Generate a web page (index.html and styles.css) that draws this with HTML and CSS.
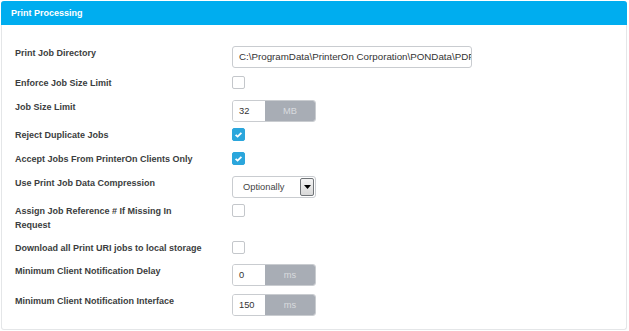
FILE: index.html
```html
<!DOCTYPE html>
<html>
<head>
<meta charset="utf-8">
<link rel="stylesheet" href="styles.css">
</head>
<body>
<div class="panel">
  <div class="panel-head">Print Processing</div>
  <div class="panel-body">
    <div class="row h30">
      <div class="label">Print Job Directory</div>
      <div class="ctl"><div class="text-input wide">C:\ProgramData\PrinterOn Corporation\PONData\PDF</div></div>
    </div>
    <div class="row h24">
      <div class="label">Enforce Job Size Limit</div>
      <div class="ctl"><span class="cb"></span></div>
    </div>
    <div class="row h28">
      <div class="label">Job Size Limit</div>
      <div class="ctl"><div class="group"><span class="num">32</span><span class="addon">MB</span></div></div>
    </div>
    <div class="row h24">
      <div class="label">Reject Duplicate Jobs</div>
      <div class="ctl"><span class="cb on"><svg viewBox="0 0 13 13" width="13" height="13"><path d="M3.6 6.8 L5.6 8.6 L9.4 4.8" fill="none" stroke="#fff" stroke-width="1.8"/></svg></span></div>
    </div>
    <div class="row h24">
      <div class="label">Accept Jobs From PrinterOn Clients Only</div>
      <div class="ctl"><span class="cb on"><svg viewBox="0 0 13 13" width="13" height="13"><path d="M3.6 6.8 L5.6 8.6 L9.4 4.8" fill="none" stroke="#fff" stroke-width="1.8"/></svg></span></div>
    </div>
    <div class="row h28">
      <div class="label">Use Print Job Data Compression</div>
      <div class="ctl"><div class="select"><span class="sel-text">Optionally</span><span class="sel-btn"><svg viewBox="0 0 7 4" width="7" height="4"><path d="M0 0 H7 L3.5 4 Z" fill="#000"/></svg></span></div></div>
    </div>
    <div class="row h37">
      <div class="label two">Assign Job Reference # If Missing In Request</div>
      <div class="ctl"><span class="cb"></span></div>
    </div>
    <div class="row h23">
      <div class="label">Download all Print URI jobs to local storage</div>
      <div class="ctl"><span class="cb"></span></div>
    </div>
    <div class="row h30">
      <div class="label">Minimum Client Notification Delay</div>
      <div class="ctl"><div class="group"><span class="num">0</span><span class="addon">ms</span></div></div>
    </div>
    <div class="row h30">
      <div class="label">Minimum Client Notification Interface</div>
      <div class="ctl"><div class="group"><span class="num">150</span><span class="addon">ms</span></div></div>
    </div>
  </div>
</div>
</body>
</html>
```
FILE: styles.css
```css
html, body {
  margin: 0;
  padding: 0;
  background: #ffffff;
}
body {
  font-family: "Liberation Sans", Arial, sans-serif;
  color: #333;
  width: 629px;
  height: 331px;
  overflow: hidden;
}
.panel {
  margin: 1px 0 0 1px;
  width: 626px;
  height: 329px;
  border: 1px solid #e4e6e8;
  border-top: none;
  border-radius: 3px;
  box-sizing: border-box;
  background: #fff;
}
.panel-head {
  height: 24px;
  background: #00adef;
  color: #fff;
  font-weight: bold;
  font-size: 9px;
  line-height: 24px;
  padding-left: 10px;
  border-radius: 3px 3px 0 0;
  margin: 0 -1px;
}
.panel-body {
  padding: 21px 0 0 13px;
}
.row {
  display: grid;
  grid-template-columns: 217px 1fr;
  align-items: start;
}
.h30 { height: 30px; }
.h24 { height: 24px; }
.h28 { height: 28px; }
.h37 { height: 37px; }
.h23 { height: 23px; }
.label {
  font-size: 9px;
  font-weight: bold;
  color: #3b3d40;
  line-height: 14px;
}
.label.two { width: 172px; }
.ctl { display: flex; }
.text-input {
  height: 22px;
  box-sizing: border-box;
  border: 1px solid #c9ccd0;
  border-radius: 3px;
  font-size: 9.75px;
  line-height: 20px;
  padding-left: 6px;
  padding-right: 1px;
  white-space: nowrap;
  overflow: hidden;
  color: #333;
}
.text-input.wide { width: 240px; }
.cb {
  width: 13px;
  height: 13px;
  box-sizing: border-box;
  border: 1px solid #c4c7cb;
  border-radius: 2px;
  display: block;
  background: #fff;
}
.cb.on {
  background: #2ba6dc;
  border-color: #2ba6dc;
}
.cb.on svg {
  display: block;
  margin: -1px;
}
.group {
  display: flex;
  height: 22px;
  width: 84px;
  box-sizing: border-box;
  border: 1px solid #c9ccd0;
  border-radius: 3px;
  overflow: hidden;
  font-size: 9.3px;
}
.num {
  width: 32px;
  line-height: 20px;
  padding-left: 6px;
  box-sizing: border-box;
  color: #333;
  background: #fff;
}
.addon {
  flex: 1;
  background: #a8adb5;
  color: #d8dbdf;
  line-height: 20px;
  text-align: center;
}
.select {
  display: flex;
  height: 22px;
  width: 84px;
  box-sizing: border-box;
  border: 1px solid #c9ccd0;
  border-radius: 3px;
  font-size: 9.3px;
  align-items: center;
  justify-content: space-between;
}
.sel-text {
  padding-left: 10px;
  color: #444;
}
.sel-btn {
  width: 14px;
  height: 18px;
  margin-right: 1px;
  box-sizing: border-box;
  border: 1px solid #707478;
  border-radius: 2px;
  background: linear-gradient(#f4f4f4, #d8d8d8);
  display: flex;
  align-items: center;
  justify-content: center;
}
.sel-btn svg { display: block; }
```
